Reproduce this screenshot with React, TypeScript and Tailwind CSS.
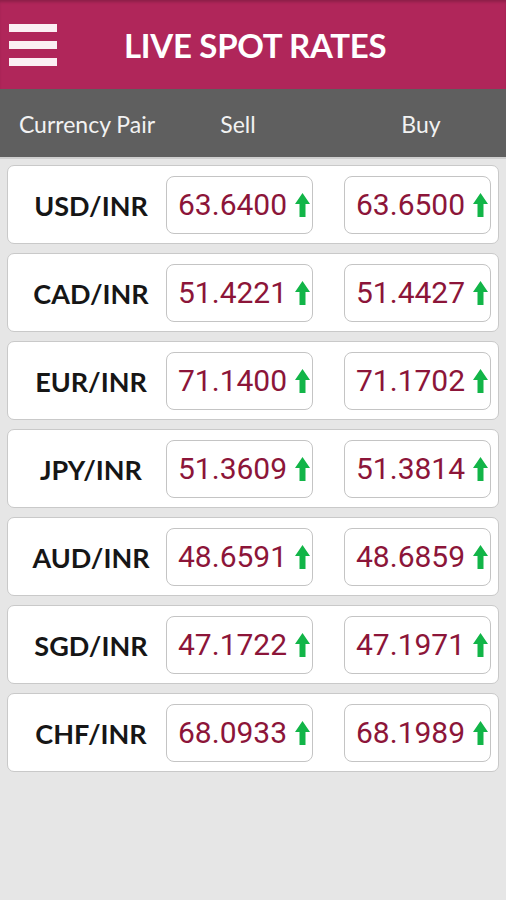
import React from "react";

const rows = [
  ["USD/INR", "63.6400", "63.6500"],
  ["CAD/INR", "51.4221", "51.4427"],
  ["EUR/INR", "71.1400", "71.1702"],
  ["JPY/INR", "51.3609", "51.3814"],
  ["AUD/INR", "48.6591", "48.6859"],
  ["SGD/INR", "47.1722", "47.1971"],
  ["CHF/INR", "68.0933", "68.1989"],
];

function Arrow() {
  return (
    <svg width="15" height="24" viewBox="0 0 15 24" className="shrink-0">
      <polygon points="7.5,0 15,11 10.5,11 10.5,24 4.5,24 4.5,11 0,11" fill="#12b548" />
    </svg>
  );
}

function RateBox({ value }: { value: string }) {
  return (
    <div className="w-[147px] h-[58px] shrink-0 rounded-[8px] border-[1.5px] border-[#c4c4c4] bg-white flex items-center pl-[11px] gap-[8px]">
      <span
        className="text-[30px] leading-none text-[#8c1539]"
        style={{ fontFamily: "Roboto, 'Liberation Sans', sans-serif" }}
      >
        {value}
      </span>
      <Arrow />
    </div>
  );
}

export default function App() {
  const futura = { fontFamily: "Lato, 'Open Sans', sans-serif" };
  return (
    <div className="w-[506px] h-[900px] bg-[#e6e6e6] flex flex-col" style={futura}>
      <div className="h-[89px] bg-[#b0265a] flex items-center relative shadow-[inset_0_3px_3px_-1px_rgba(0,0,0,0.2)]">
        <div className="flex flex-col gap-[9px] ml-[9px]">
          <div className="w-[48px] h-[8px] bg-[#fbeff3]" />
          <div className="w-[48px] h-[8px] bg-[#fbeff3]" />
          <div className="w-[48px] h-[8px] bg-[#fbeff3]" />
        </div>
        <div className="ml-[67px] text-white text-[33px] font-bold tracking-[-0.3px] leading-none pt-[2px]">
          LIVE SPOT RATES
        </div>
      </div>
      <div className="h-[70px] bg-[#5f5f5f] border-b-[2px] border-[#cfcfcf] flex items-center overflow-hidden text-[#f2f2f2] text-[23px] leading-none pt-[2px]">
        <div className="w-[174px] shrink-0 text-center">Currency Pair</div>
        <div className="w-[128px] shrink-0 text-center">Sell</div>
        <div className="w-[238px] shrink-0 text-center">Buy</div>
      </div>
      <div className="flex flex-col gap-[9px] pt-[6px] px-[7px]">
        {rows.map(([pair, sell, buy]) => (
          <div
            key={pair}
            className="h-[79px] bg-white rounded-[7px] border border-[#c9c9c9] flex items-center"
          >
            <div className="w-[150px] shrink-0 ml-[8px] text-center text-[27px] font-bold text-[#161616] leading-none pt-[1px]">
              {pair}
            </div>
            <RateBox value={sell} />
            <div className="w-[31px] shrink-0" />
            <RateBox value={buy} />
          </div>
        ))}
      </div>
    </div>
  );
}
